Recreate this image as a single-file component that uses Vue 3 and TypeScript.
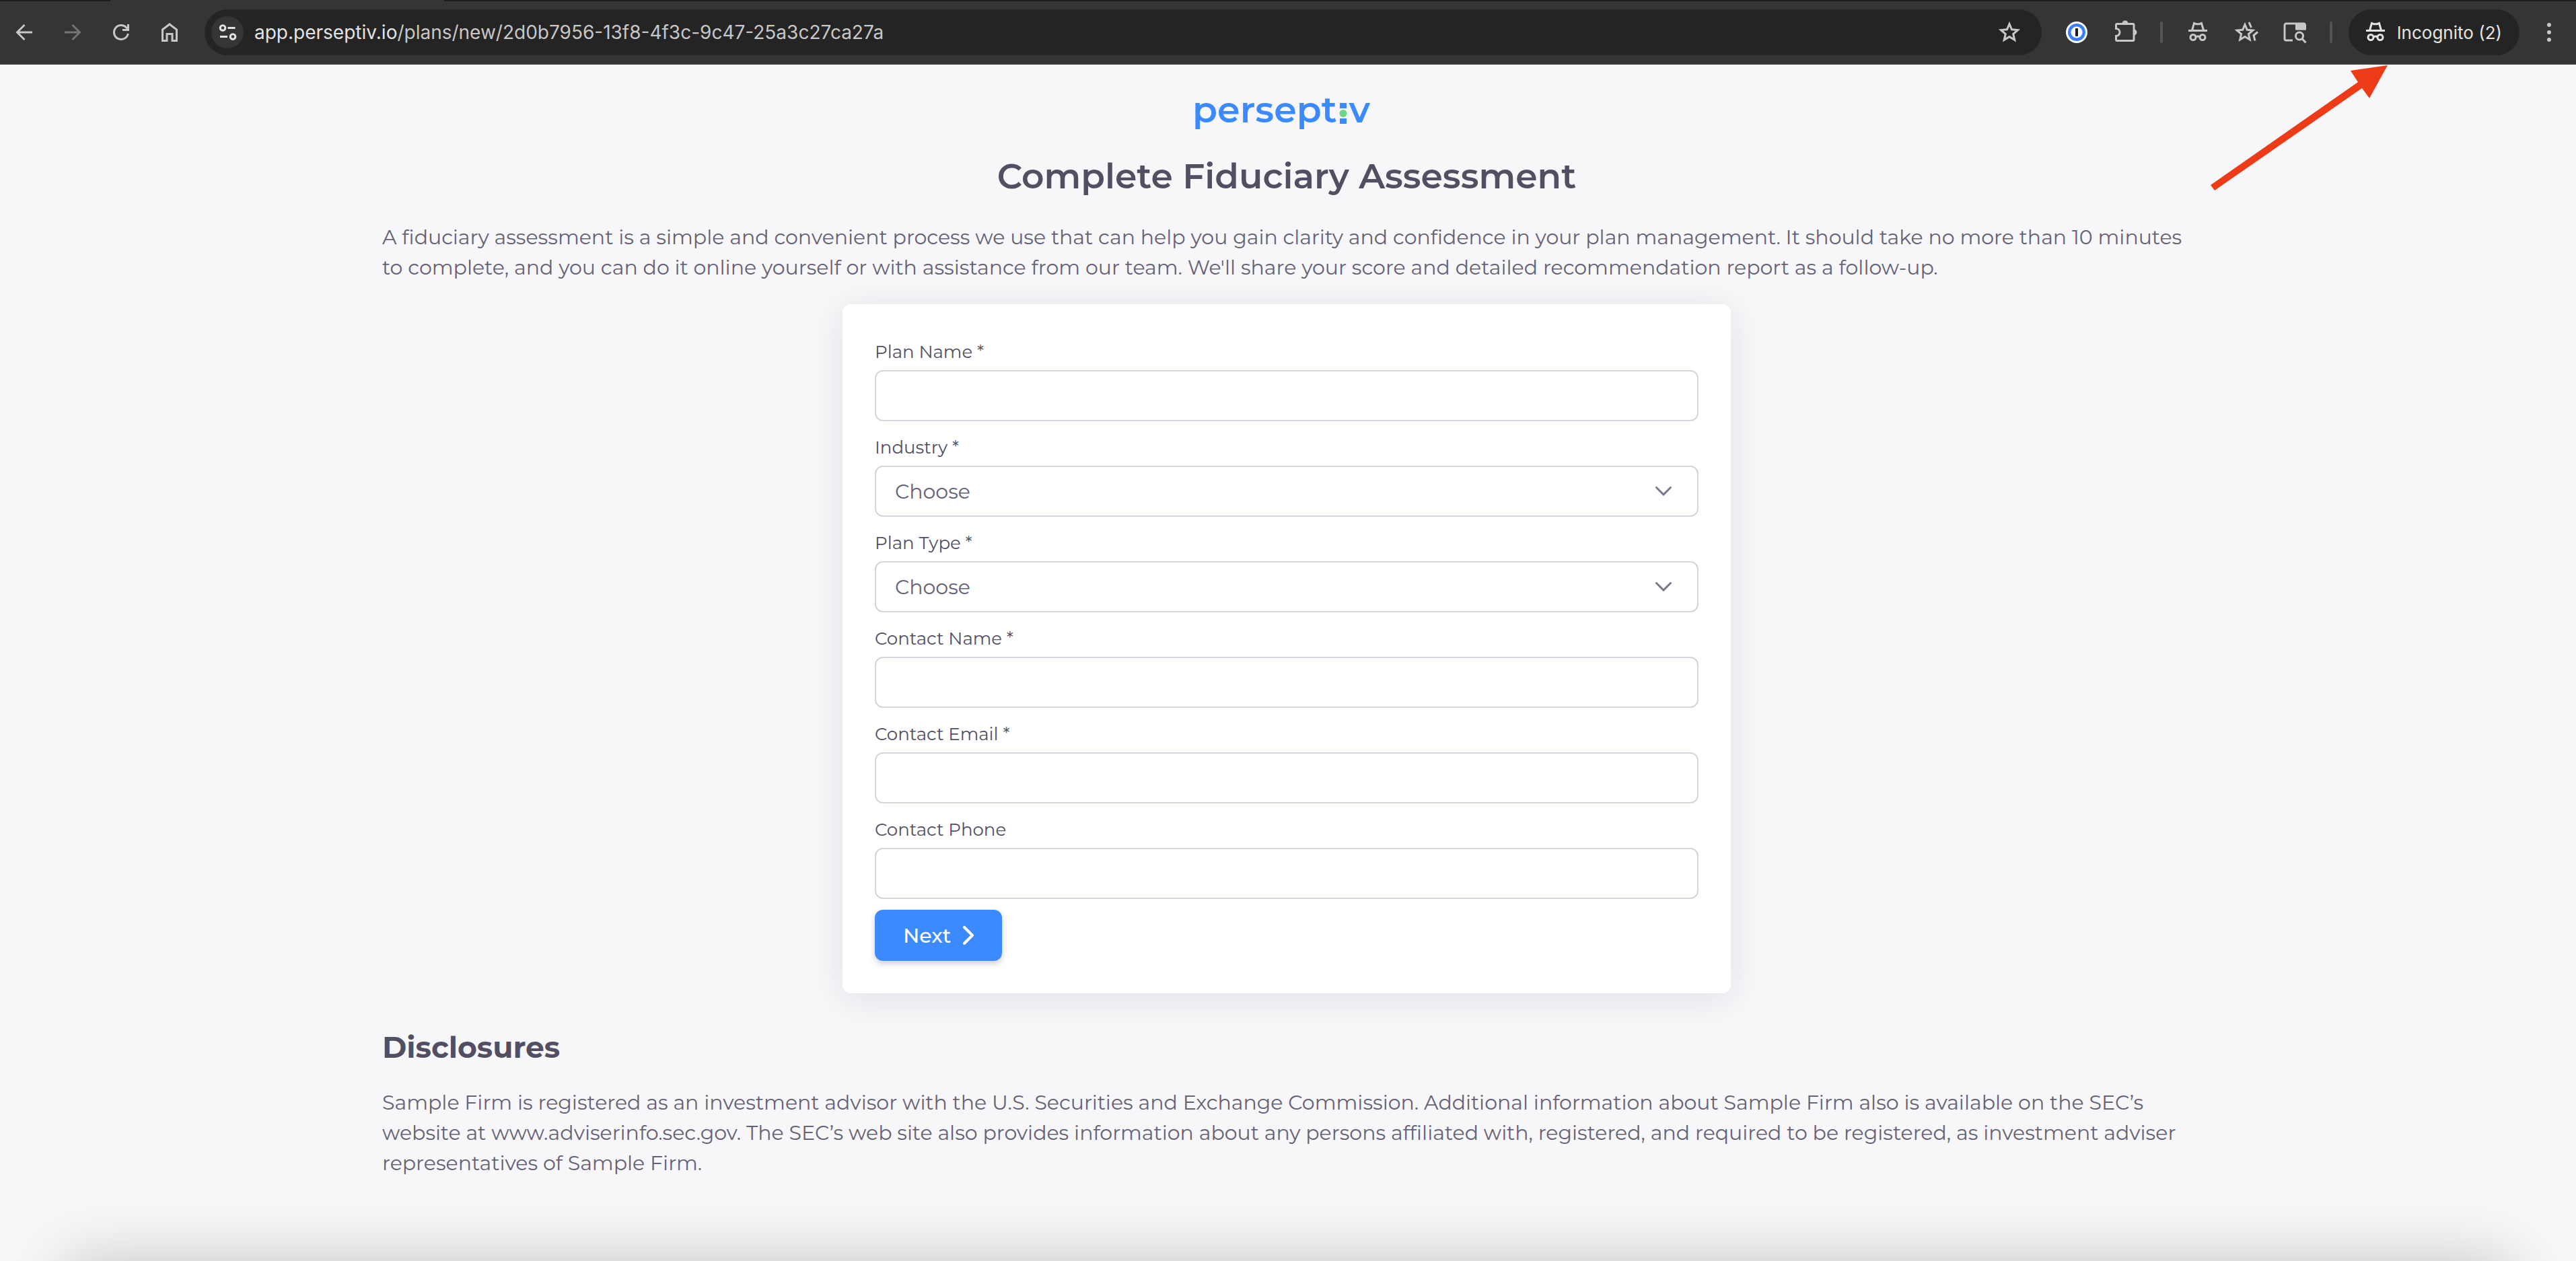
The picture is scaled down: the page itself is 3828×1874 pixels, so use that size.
<script setup lang="ts">
import { ref } from 'vue'

interface Field {
  id: string
  label: string
  kind: 'text' | 'email' | 'tel' | 'select'
}

const fields: Field[] = [
  { id: 'plan-name', label: 'Plan Name *', kind: 'text' },
  { id: 'industry', label: 'Industry *', kind: 'select' },
  { id: 'plan-type', label: 'Plan Type *', kind: 'select' },
  { id: 'contact-name', label: 'Contact Name *', kind: 'text' },
  { id: 'contact-email', label: 'Contact Email *', kind: 'email' },
  { id: 'contact-phone', label: 'Contact Phone', kind: 'tel' },
]

const values = ref<Record<string, string>>(
  Object.fromEntries(fields.map((f) => [f.id, ''])),
)
</script>

<template>
  <div class="window">
    <header class="browser">
      <div class="tabstrip"><span class="tab-left"></span><span class="tab-active"></span><span class="tab-rest"></span></div>
      <div class="toolbar">
        <nav class="nav" aria-label="Navigation">
          <button type="button" aria-label="Back">
            <svg viewBox="0 0 40 40"><path d="M32 20H10M20.500 9L9.500 20l11 11" /></svg>
          </button>
          <button type="button" class="dim" aria-label="Forward" disabled>
            <svg viewBox="0 0 40 40"><path d="M8 20h22M19.500 9l11 11l-11 11" /></svg>
          </button>
          <button type="button" aria-label="Reload">
            <svg viewBox="0 0 40 40"><path d="M30.300 22A10.500 10.500 0 1 1 27.600 12.800L31 16M30.500 8v8.500H22" /></svg>
          </button>
          <button type="button" aria-label="Home">
            <svg viewBox="0 0 40 40"><path d="M9.500 16L20 8l10.500 8v16.500H24V22.500h-8v10H9.500z" /></svg>
          </button>
        </nav>

        <div class="omnibox">
          <button type="button" class="site-info" aria-label="View site information">
            <svg viewBox="0 0 40 40"><circle cx="13" cy="13.500" r="3.800" /><path d="M20.500 13.500h11M9 26.500h11" /><circle cx="28" cy="26.500" r="3.800" /></svg>
          </button>
          <div class="url" role="textbox" aria-label="Address" contenteditable="true"><span class="host">app.perseptiv.io</span><span>/plans/new/2d0b7956-13f8-4f3c-9c47-25a3c27ca27a</span></div>
          <button type="button" class="bookmark" aria-label="Bookmark this page">
            <svg viewBox="0 0 40 40"><path d="M20 7.500l3.500 8.300 9 .8-6.800 5.900 2.100 8.800-7.800-4.700-7.800 4.700 2.100-8.800-6.800-5.900 9-.8z" /></svg>
          </button>
        </div>

        <div class="extensions">
          <button type="button" aria-label="Password manager">
            <svg viewBox="0 0 40 40"><circle class="white" cx="20" cy="20" r="16" /><circle class="blue" cx="20" cy="20" r="13" /><circle class="white" cx="20" cy="20" r="8.500" /><rect class="ink" x="18" y="14" width="4" height="12" rx="1" /></svg>
          </button>
          <button type="button" aria-label="Extensions">
            <svg viewBox="0 0 40 40"><path d="M8 7.500H31.500a1.500 1.500 0 0 1 1.500 1.500V31a1.500 1.500 0 0 1-1.500 1.500H8A1.500 1.500 0 0 1 6.500 31V25.500a5.500 5.500 0 0 0 0-11V9A1.500 1.500 0 0 1 8 7.500z" /><path class="solid" d="M15.500 7a4.500 4.500 0 0 1 9 0zM33 15.500a4.500 4.500 0 0 1 0 9z" /></svg>
          </button>
          <span class="divider"></span>
          <button type="button" aria-label="Incognito extension">
            <svg viewBox="0 0 40 40"><path d="M6 17.500h28M11.500 17l3-10.500 3 1.200h5l3-1.200 3 10.500M17 27q3-2 6 0" /><circle cx="13" cy="27.500" r="4" /><circle cx="27" cy="27.500" r="4" /></svg>
          </button>
          <button type="button" aria-label="Bookmarks">
            <svg viewBox="0 0 40 40"><path d="M18 8.500l3.300 7.800 8.500.8-6.400 5.500 1.900 8.300-7.300-4.400-7.300 4.400 1.900-8.300-6.400-5.500 8.500-.8zM24 5l3.500 8M37 19.500l-6 5 2 8" /></svg>
          </button>
          <button type="button" aria-label="Search page">
            <svg viewBox="0 0 40 40"><path d="M17 32H7.500a2.500 2.500 0 0 1-2.500-2.500v-20A2.500 2.500 0 0 1 7.500 7H33a2.500 2.500 0 0 1 2.500 2.500V15H22.500V8" /><path class="solid" d="M22 7h14v9.500H22z" /><circle cx="27" cy="25.500" r="5.500" /><path d="M31 29.500l5.500 6" /></svg>
          </button>
          <span class="divider"></span>
        </div>

        <button type="button" class="incognito">
          <svg viewBox="0 0 40 40"><path d="M6 17.500h28M11.500 17l3-10.500 3 1.200h5l3-1.200 3 10.500M17 27q3-2 6 0" /><circle cx="13" cy="27.500" r="4" /><circle cx="27" cy="27.500" r="4" /></svg>
          Incognito (2)
        </button>
        <button type="button" class="more" aria-label="More">
          <svg viewBox="0 0 40 40"><circle class="solid" cx="20" cy="9" r="3" /><circle class="solid" cx="20" cy="20" r="3" /><circle class="solid" cx="20" cy="31" r="3" /></svg>
        </button>
      </div>
      <svg class="pointer" viewBox="0 0 264 188" aria-hidden="true"><path d="M1 179L220 26L209 9L264 1L237 50L226 35L7 187z" /></svg>
    </header>

    <main class="page">
      <div class="logo" aria-label="perseptiv">
        <span>persept</span>
        <svg viewBox="0 0 12 32" aria-hidden="true"><path d="M1 1h10v8H1zM1 24h10v8H1z" /><circle cx="6" cy="16.500" r="5.500" /></svg>
        <span>v</span>
      </div>
      <h1>Complete Fiduciary Assessment</h1>
      <p class="intro">
        A fiduciary assessment is a simple and convenient process we use that can help you gain clarity and confidence in your plan management. It should take no more than 10 minutes to complete, and you can do it online yourself or with assistance from our team. We'll share your score and detailed recommendation report as a follow-up.
      </p>

      <form class="card" @submit.prevent>
        <div v-for="f in fields" :key="f.id" class="field">
          <label :for="f.id">{{ f.label }}</label>
          <div v-if="f.kind === 'select'" class="select">
            <select :id="f.id" v-model="values[f.id]">
              <option value="">Choose</option>
            </select>
            <svg viewBox="0 0 24 14" aria-hidden="true"><path d="M1.500 1.500L12 12L22.500 1.500" /></svg>
          </div>
          <input v-else :id="f.id" v-model="values[f.id]" :type="f.kind" />
        </div>
        <button type="submit" class="next">
          Next
          <svg viewBox="0 0 16 28" aria-hidden="true"><path d="M2 2L14 14L2 26" /></svg>
        </button>
      </form>

      <h2>Disclosures</h2>
      <p class="disclosure">
        Sample Firm is registered as an investment advisor with the U.S. Securities and Exchange Commission. Additional information about Sample Firm also is available on the SEC’s website at www.adviserinfo.sec.gov. The SEC’s web site also provides information about any persons affiliated with, registered, and required to be registered, as investment adviser representatives of Sample Firm.
      </p>
    </main>
    <div class="bottom-shade" aria-hidden="true"><div></div></div>
  </div>
</template>

<style>
body {
  margin: 0;
  background: #f7f7f9;
}
</style>

<style scoped>
* {
  box-sizing: border-box;
}

.window {
  min-height: 100vh;
  font-family: Montserrat, Inter, sans-serif;
  color: #666276;
}

button {
  padding: 0;
  border: 0;
  background: none;
  font: inherit;
  color: inherit;
  cursor: pointer;
}

.browser {
  position: relative;
  background: #353535;
  border-bottom: 2px solid #3e3a3a;
  font-family: Inter, sans-serif;
  color: #c7c7c7;
}

.tabstrip {
  display: flex;
  height: 2px;
}

.tab-left {
  width: 164px;
  background: #1c1c1c;
}

.tab-active {
  width: 496px;
}

.tab-rest {
  flex: 1;
  background: #1c1c1c;
}

.toolbar {
  display: flex;
  align-items: center;
  height: 92px;
  padding: 0 20px 0 16px;
}

.toolbar svg {
  display: block;
  width: 40px;
  height: 40px;
  fill: none;
  stroke: currentColor;
  stroke-width: 3;
}

.toolbar svg .solid {
  fill: currentColor;
  stroke: none;
}

.toolbar svg .white {
  fill: #fff;
  stroke: none;
}

.toolbar svg .blue {
  fill: #3b7ef6;
  stroke: none;
}

.toolbar svg .ink {
  fill: #1c1c1c;
  stroke: none;
}

.nav {
  display: flex;
  gap: 32px;
  margin-right: 32px;
}

.dim {
  color: #747474;
}

.omnibox {
  display: flex;
  flex: 1;
  align-items: center;
  height: 68px;
  padding: 0 28px 0 10px;
  border-radius: 34px;
  background: #242424;
}

.site-info {
  display: grid;
  place-items: center;
  width: 48px;
  height: 48px;
  margin-right: 16px;
  border-radius: 50%;
  background: #353535;
  color: #e3e3e3;
}

.url {
  flex: 1;
  font-size: 28px;
  line-height: 36px;
  white-space: nowrap;
}

.host {
  color: #e3e3e3;
}

.extensions {
  display: flex;
  align-items: center;
  gap: 32px;
  margin: 0 24px 0 32px;
}

.divider {
  width: 4px;
  height: 32px;
  border-radius: 2px;
  background: #555;
}

.incognito {
  display: flex;
  align-items: center;
  gap: 12px;
  height: 68px;
  margin-right: 24px;
  padding: 0 26px 0 20px;
  border-radius: 34px;
  background: #242424;
  color: #e3e3e3;
  font-size: 26px;
}

.pointer {
  position: absolute;
  top: 96px;
  right: 280px;
  width: 264px;
  height: 188px;
  fill: #ed3b18;
}

.page {
  display: flex;
  flex-direction: column;
  align-items: center;
  max-width: 2692px;
  margin: 0 auto;
  padding: 28px 4px 0 0;
}

.logo {
  display: flex;
  align-items: center;
  gap: 3px;
  margin-right: 16px;
  font-size: 54px;
  font-weight: 600;
  line-height: 78px;
  color: #3c8aff;
}

.logo svg {
  width: 12px;
  height: 32px;
  margin-top: 10px;
  fill: #3c8aff;
}

.logo circle {
  fill: #6fd684;
}

h1 {
  margin: 26px 0 34px;
  font-size: 52px;
  font-weight: 600;
  line-height: 68px;
  color: #524f63;
}

p {
  margin: 0;
  width: 100%;
  font-size: 30px;
  line-height: 45px;
}

.card {
  width: 100%;
  max-width: 1320px;
  margin: 32px 0 52px;
  padding: 48px;
  border-radius: 12px;
  background: #fff;
  box-shadow: 0 8px 48px rgba(34, 30, 80, 0.1);
}

.field {
  margin-bottom: 16px;
}

label {
  display: block;
  padding-bottom: 4px;
  font-size: 26px;
  line-height: 46px;
  color: #524f63;
}

input,
select {
  display: block;
  width: 100%;
  height: 76px;
  padding: 0 28px;
  border: 2px solid #d4d4dc;
  border-radius: 12px;
  background: #fff;
  font-family: inherit;
  font-size: 30px;
  color: #666276;
  appearance: none;
}

.select {
  position: relative;
}

.select svg {
  position: absolute;
  top: 31px;
  right: 40px;
  width: 24px;
  height: 14px;
  fill: none;
  stroke: #7c788a;
  stroke-width: 3;
  stroke-linecap: round;
  pointer-events: none;
}

.next {
  display: flex;
  align-items: center;
  gap: 18px;
  height: 76px;
  padding: 0 42px;
  border-radius: 12px;
  background: #3c8aff;
  box-shadow: 0 4px 10px rgba(30, 30, 60, 0.22);
  font-size: 30px;
  font-weight: 500;
  color: #fff;
}

.next svg {
  width: 16px;
  height: 28px;
  fill: none;
  stroke: #fff;
  stroke-width: 4;
  stroke-linecap: round;
  stroke-linejoin: round;
}

h2 {
  width: 100%;
  margin: 0 0 32px;
  font-size: 44px;
  font-weight: 700;
  line-height: 56px;
  color: #524f63;
}

.bottom-shade {
  position: fixed;
  right: 0;
  bottom: 0;
  left: 0;
  height: 120px;
  overflow: hidden;
  pointer-events: none;
}

.bottom-shade div {
  height: 400px;
  margin: 120px 96px 0;
  box-shadow: 0 0 88px rgba(0, 0, 0, 0.2);
}
</style>
